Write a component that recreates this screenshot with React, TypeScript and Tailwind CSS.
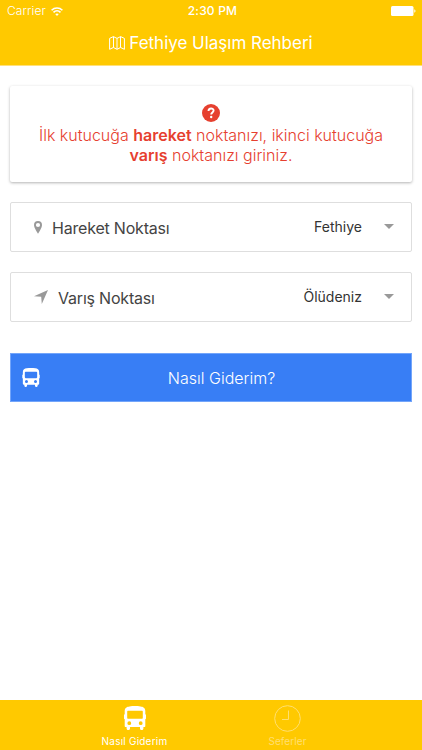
import React from 'react';

type IconProps = { className?: string };

const WifiIcon = ({ className }: IconProps) => (
  <svg viewBox="0 0 12 9" className={className} fill="none" stroke="currentColor" strokeWidth="1.6">
    <path d="M.6 3.2C3.6.2 8.4.2 11.4 3.2M2.5 5.3c2-1.9 5-1.9 7 0" />
    <path d="M6 9 4.2 7.1c1-.9 2.6-.9 3.6 0z" fill="currentColor" stroke="none" />
  </svg>
);

const BatteryIcon = ({ className }: IconProps) => (
  <svg viewBox="0 0 25 10" className={className} fill="currentColor">
    <rect width="22.5" height="10" rx="1.5" />
    <path d="M23.3 3.3c1.6.4 1.6 3 0 3.4z" />
  </svg>
);

const MapIcon = ({ className }: IconProps) => (
  <svg viewBox="0 0 16 14" className={className} fill="none" stroke="currentColor" strokeWidth="1" strokeLinejoin="round">
    <path d="M.6 2.4 4.4.6 8 2.4 11.600.6l3.800 1.800v10.900l-3.800-1.800L8 13.300l-3.600-1.800-3.800 1.800z" />
    <path d="M4.500.7v10.800M8 2.400v10.800M11.500.7v10.800" />
  </svg>
);

const HelpIcon = ({ className }: IconProps) => (
  <svg viewBox="0 0 18 18" className={className}>
    <circle cx="9" cy="9" r="9" fill="currentColor" />
    <path d="M6.500 7c0-3.400 5.100-3.200 5.100-.4 0 1.900-2.400 1.900-2.400 4" fill="none" stroke="#fff" strokeWidth="1.900" />
    <circle cx="9.200" cy="13" r="1.200" fill="#fff" />
  </svg>
);

const PinIcon = ({ className }: IconProps) => (
  <svg viewBox="0 0 8 13" className={className} fill="currentColor" fillRule="evenodd">
    <path d="M4 0a4 4 0 0 0-4 4c0 3 4 8.800 4 8.800S8 7 8 4a4 4 0 0 0-4-4zm0 6.100a2.100 2.100 0 1 1 0-4.200 2.100 2.100 0 0 1 0 4.200z" />
  </svg>
);

const NavigateIcon = ({ className }: IconProps) => (
  <svg viewBox="0 0 14 14" className={className} fill="currentColor">
    <path d="M14 0 0 6.300l7.200.5.6 7.200z" />
  </svg>
);

const BusIcon = ({ className }: IconProps) => (
  <svg viewBox="0 0 22 24" className={className} fill="currentColor" fillRule="evenodd">
    <path d="M.7 5C.7 1.600 3 .7 5.500.4 9 0 13 0 16.500.4c2.500.3 4.800 1.200 4.800 4.600v3.200l.7.500v4l-.7.500V20c0 .6-.4 1-1 1h-.9v1.500c0 .8-.6 1.500-1.400 1.500h-.6c-.8 0-1.400-.7-1.400-1.500V21H6v1.500C6 23.300 5.400 24 4.600 24H4c-.8 0-1.400-.7-1.400-1.500V21h-.9c-.6 0-1-.4-1-1v-6.800l-.7-.5v-4l.7-.5zM4.200 4.800c-.6 0-1 .4-1 1v6c0 .6.400 1 1 1h13.600c.6 0 1-.4 1-1v-6c0-.6-.4-1-1-1zM5.300 15.300a1.900 1.900 0 1 0 0 3.800 1.900 1.900 0 0 0 0-3.800zm11.400 0a1.900 1.900 0 1 0 0 3.800 1.900 1.900 0 0 0 0-3.800z" />
  </svg>
);

const ClockIcon = ({ className }: IconProps) => (
  <svg viewBox="0 0 27 27" className={className} fill="none" stroke="currentColor" strokeWidth="1">
    <circle cx="13.500" cy="13.500" r="12.800" />
    <path d="M14.500 5.500v9H8" />
  </svg>
);

type PointSelectProps = {
  icon: React.ReactNode;
  label: string;
  value: string;
};

const PointSelect = ({ icon, label, value }: PointSelectProps) => (
  <button type="button" className="flex h-[50px] w-full items-center rounded-[2px] border border-[#dedede] bg-white pr-[17px] text-left">
    {icon}
    <span className="pt-px text-[16px] leading-5 tracking-[-0.2px] text-[#444]">{label}</span>
    <span className="ml-auto mr-[22px] pb-px text-[14px] leading-5 text-[#333]">{value}</span>
    <svg viewBox="0 0 10 5" className="mb-px h-[5px] w-[10px]" fill="#999">
      <path d="M0 0h10L5 5z" />
    </svg>
  </button>
);

const App = () => {
  return (
    <div className="flex h-screen flex-col bg-white font-['Inter','Liberation_Sans',sans-serif]">
      <header className="h-[66px] border-b border-[#ffe07a] bg-[#ffc900] text-white">
        <div className="grid h-[22px] grid-cols-3 items-center pl-[7px] pr-[6px] text-[12px]">
          <div className="flex items-center gap-[5px]">
            <span className="font-light tracking-[0.1px]">Carrier</span>
            <WifiIcon className="h-[9px] w-[12px]" />
          </div>
          <span className="pl-[2px] text-center font-medium tracking-[0.2px]">2:30 PM</span>
          <BatteryIcon className="h-[10px] w-[25px] justify-self-end" />
        </div>
        <h1 className="flex h-[43px] items-center justify-center gap-[4px] text-[17px]">
          <MapIcon className="mb-px h-[14px] w-[16px]" />
          <span className="pt-px tracking-[-0.02px]">Fethiye Ulaşım Rehberi</span>
        </h1>
      </header>

      <main className="flex-1 px-[10px] pt-5">
        <section className="mb-5 flex h-[96px] flex-col items-center rounded-[2px] pt-[18px] text-center text-[16px] font-light leading-5 text-[#e6402f] shadow-[0_1px_3px_rgba(0,0,0,0.3)]">
          <HelpIcon className="mb-[3px] h-[18px] w-[18px]" />
          <p>
            İlk kutucuğa <b className="font-semibold">hareket</b> noktanızı, ikinci kutucuğa
            <br />
            <b className="font-semibold">varış</b> noktanızı giriniz.
          </p>
        </section>

        <div className="flex flex-col gap-5">
          <PointSelect
            icon={<PinIcon className="ml-[23px] mr-[10px] h-[13px] w-[8px] text-[#999]" />}
            label="Hareket Noktası"
            value="Fethiye"
          />
          <PointSelect
            icon={<NavigateIcon className="ml-[23px] mr-[10px] h-[14px] w-[14px] text-[#999]" />}
            label="Varış Noktası"
            value="Ölüdeniz"
          />
        </div>

        <button type="button" className="mt-[31px] grid h-[49px] w-full grid-cols-[42px_1fr_22px] items-center border border-[#73a5fa] bg-[#387ef5] text-[16px] text-white">
          <BusIcon className="mb-px ml-[11px] h-[19px] w-[18px]" />
          <span className="pl-px font-light">Nasıl Giderim?</span>
        </button>
      </main>

      <nav className="flex h-[50px] justify-center bg-[#ffc900] text-[10px] leading-3 text-white">
        <a className="flex w-[153px] flex-col items-center gap-[5px] pt-[6px]">
          <BusIcon className="h-[24px] w-[22px]" />
          <span className="tracking-[0.22px]">Nasıl Giderim</span>
        </a>
        <a className="flex w-[153px] flex-col items-center gap-[3px] pt-[5px] text-[#ffdf70]">
          <ClockIcon className="h-[27px] w-[27px]" />
          <span className="tracking-[0.1px]">Seferler</span>
        </a>
      </nav>
    </div>
  );
};

export default App;
